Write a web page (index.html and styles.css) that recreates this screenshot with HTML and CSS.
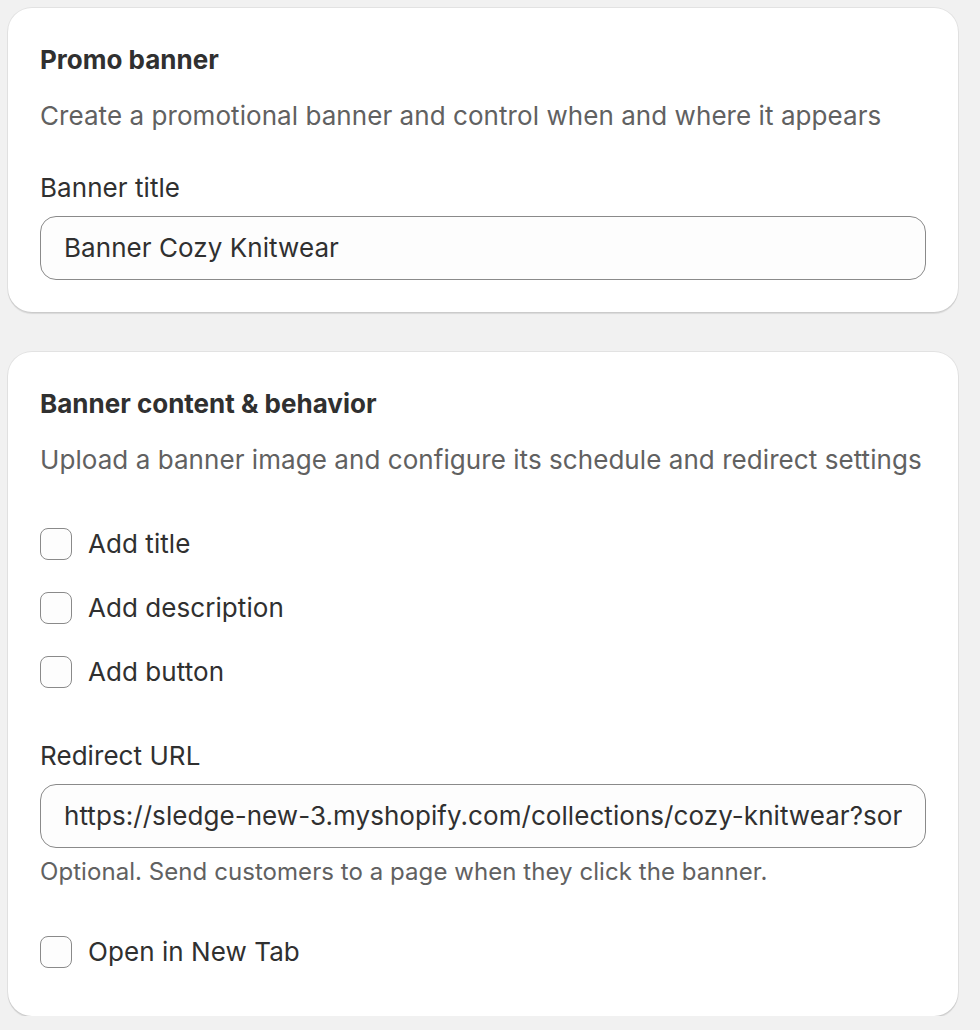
FILE: index.html
```html
<!DOCTYPE html>
<html lang="en">
<head>
<meta charset="utf-8">
<title>Promo banner</title>
<link rel="stylesheet" href="styles.css">
</head>
<body>
<main class="page">
  <section class="card card-first">
    <h2 class="card-title">Promo banner</h2>
    <p class="card-desc">Create a promotional banner and control when and where it appears</p>
    <div class="field field-after-desc">
      <label class="field-label">Banner title</label>
      <div class="text-input">Banner Cozy Knitwear</div>
    </div>
  </section>

  <section class="card card-second">
    <h2 class="card-title">Banner content &amp; behavior</h2>
    <p class="card-desc">Upload a banner image and configure its schedule and redirect settings</p>
    <div class="choices">
      <label class="choice"><span class="checkbox"></span><span class="choice-label">Add title</span></label>
      <label class="choice"><span class="checkbox"></span><span class="choice-label">Add description</span></label>
      <label class="choice"><span class="checkbox"></span><span class="choice-label">Add button</span></label>
    </div>
    <div class="field field-url">
      <label class="field-label">Redirect URL</label>
      <div class="text-input"><span class="clip">https://sledge-new-3.myshopify.com/collections/cozy-knitwear?sor</span></div>
      <p class="help">Optional. Send customers to a page when they click the banner.</p>
    </div>
    <label class="choice choice-last"><span class="checkbox"></span><span class="choice-label">Open in New Tab</span></label>
  </section>
</main>
</body>
</html>
```

FILE: styles.css
```css
* { box-sizing: border-box; }

html, body {
  margin: 0;
  padding: 0;
  background: #f1f1f1;
}

body {
  font-family: Inter, "Noto Sans", "Liberation Sans", sans-serif;
  color: #303030;
  font-size: 26px;
  line-height: 40px;
  letter-spacing: 0.06px;
}

.page {
  padding: 8px 22px 0 8px;
  display: flex;
  flex-direction: column;
  gap: 40px;
}

.card {
  background: #ffffff;
  border-radius: 24px;
  padding: 32px;
  box-shadow: 0 0 0 1px rgba(0, 0, 0, 0.06), 0 2px 1px rgba(0, 0, 0, 0.10);
  display: flex;
  flex-direction: column;
}

.card-second { padding-bottom: 40px; }

.card-title {
  margin: 0;
  font-size: 26px;
  line-height: 40px;
  font-weight: 650;
  color: #303030;
  letter-spacing: 0;
}

.card-desc {
  margin: 16px 0 0 0;
  color: #616161;
  font-size: 26px;
  line-height: 40px;
}

.field { display: flex; flex-direction: column; }
.field-after-desc { margin-top: 32px; }
.field-url { margin-top: 40px; }

.field-label {
  font-size: 26px;
  line-height: 40px;
  color: #303030;
  margin-bottom: 8px;
}

.text-input {
  height: 64px;
  border: 1px solid #8a8a8a;
  border-radius: 16px;
  background: #fdfdfd;
  padding: 0 23px;
  display: flex;
  align-items: center;
  font-size: 26px;
  color: #303030;
  overflow: hidden;
  white-space: nowrap;
}

.clip {
  display: block;
  overflow: hidden;
  white-space: nowrap;
  width: 100%;
}

.help {
  margin: 4px 0 0 0;
  color: #616161;
  font-size: 24px;
  line-height: 40px;
}

.choices {
  margin-top: 40px;
  display: flex;
  flex-direction: column;
  gap: 16px;
}

.choice {
  display: flex;
  align-items: center;
  gap: 16px;
  height: 48px;
}

.choice-last { margin-top: 36px; }

.checkbox {
  width: 32px;
  height: 32px;
  border: 1.5px solid #8a8a8a;
  border-radius: 8px;
  background: #fdfdfd;
  flex: none;
}

.choice-label {
  font-size: 26px;
  line-height: 40px;
  color: #303030;
}
```
